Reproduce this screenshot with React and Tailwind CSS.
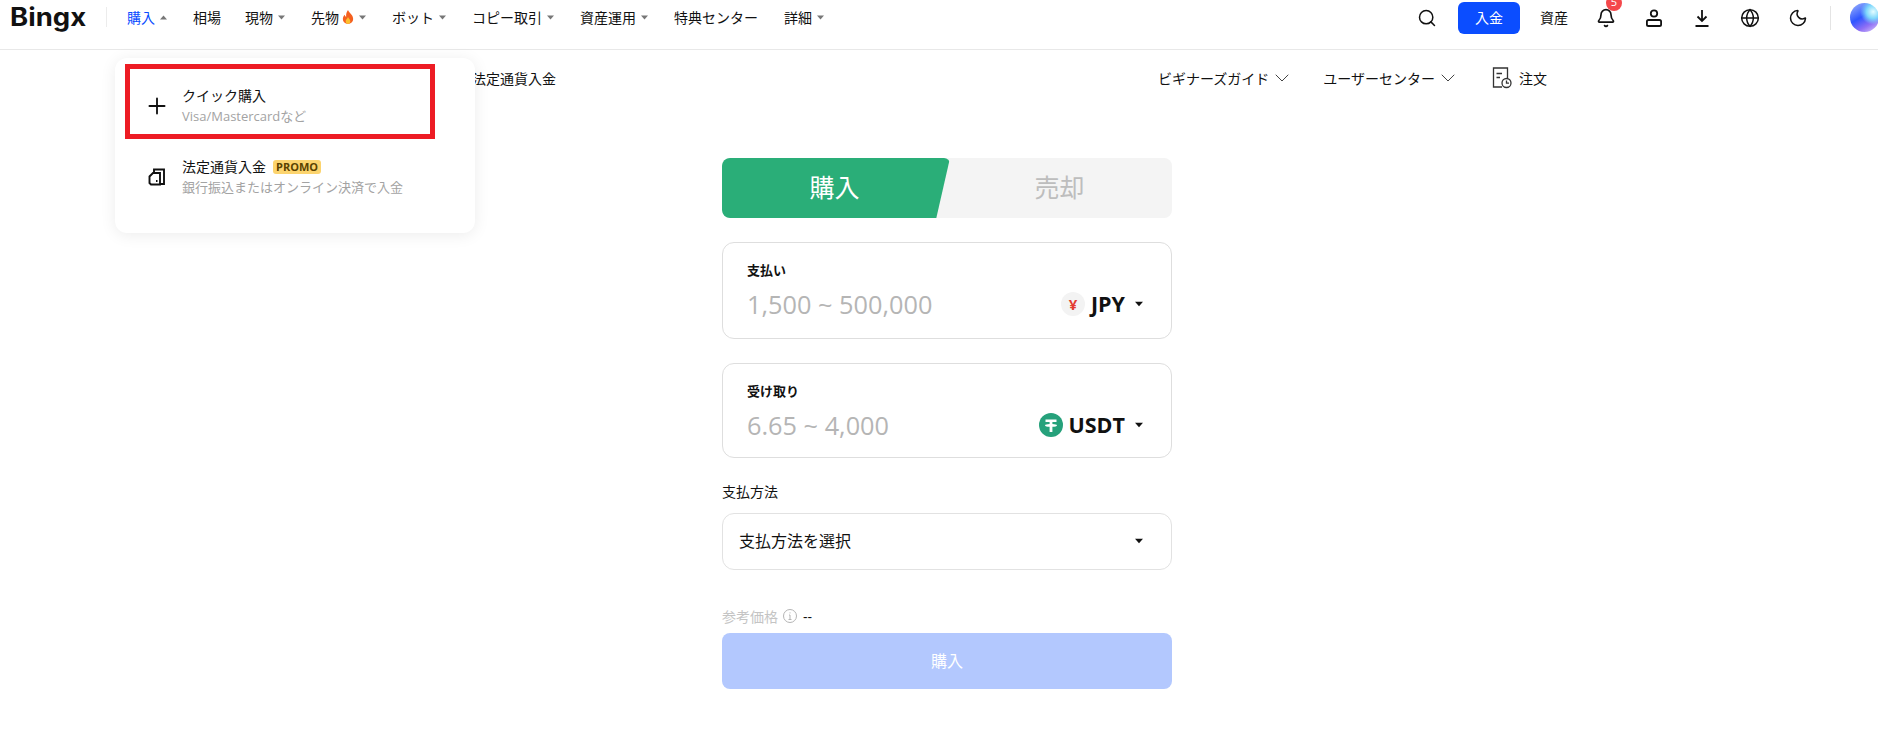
import { Search, Bell, Globe, Moon, ChevronDown, Plus } from 'lucide-react'

const FONT = 'font-["Open_Sans","Noto_Sans_CJK_JP",sans-serif]'

const NAV = [
  { label: '購入', arrow: 'up', active: true },
  { label: '相場', tight: true },
  { label: '現物', arrow: 'down' },
  { label: '先物', arrow: 'down', fire: true },
  { label: 'ボット', arrow: 'down' },
  { label: 'コピー取引', arrow: 'down' },
  { label: '資産運用', arrow: 'down' },
  { label: '特典センター' },
  { label: '詳細', arrow: 'down' },
]

function Arrow({ up, className }) {
  return (
    <svg width="7" height="5" viewBox="0 0 7 5" className={className}>
      <path d={up ? 'M3.5 0.5L7 4.5H0Z' : 'M0 0.5H7L3.5 4.5Z'} fill="currentColor" />
    </svg>
  )
}

function Logo() {
  return (
    <span className='block w-[76px]'>
      <span className='block origin-left scale-x-[1.1] text-[25px] leading-none font-bold text-[#111] font-["Inter",sans-serif]'>
        Bingx
      </span>
    </span>
  )
}

function Fire() {
  return (
    <svg width="12" height="14" viewBox="0 0 12 15" className="ml-[3px]">
      <path d="M6 0C7 3 11.5 5 11.5 9.5C11.5 13 9 15 6 15C3 15 .5 13 .5 9.5C.5 7.5 1.5 6 2.5 5C2.8 6.3 3.3 7 4 7.2C3.8 4.5 4.5 2 6 0Z" fill="#f4601f" />
      <path d="M6 7.5C6.5 9 8.5 10 8.5 12C8.5 13.8 7.3 15 6 15C4.7 15 3.5 13.8 3.5 12C3.5 10.3 5.3 9.3 6 7.5Z" fill="#fbc02d" />
    </svg>
  )
}

function Header() {
  return (
    <header className="flex h-[50px] items-start justify-between border-b border-[#e8e8e8] bg-white">
      <div className="flex h-[34px] items-center pl-[10px]">
        <Logo />
        <div className="ml-[20px] mr-[20px] h-[20px] w-px bg-[#ececec]" />
        <nav className="flex items-center gap-[26px] text-[14px] text-[#111]">
          {NAV.map((n) => (
            <div key={n.label} className={`flex items-center ${n.tight ? 'mr-[-2px]' : ''}`}>
              <span className={n.active ? 'text-[#0b4dff]' : ''}>{n.label}</span>
              {n.fire && <Fire />}
              {n.arrow && (
                <Arrow up={n.arrow === 'up'} className="ml-[5px] text-[#777]" />
              )}
            </div>
          ))}
        </nav>
      </div>
      <div className="flex h-[35px] items-center">
        <Search size={20} strokeWidth={1.8} className="mr-[21px] text-[#111]" />
        <button className="flex h-[32px] w-[62px] items-center justify-center rounded-[6px] bg-[#0b4dff] text-[14px] text-white">
          入金
        </button>
        <span className="ml-[20px] mr-[28px] text-[14px] text-[#111]">資産</span>
        <div className="relative mr-[28px] flex w-[20px] justify-center">
          <Bell size={20} strokeWidth={2} className="text-[#111]" />
          <span className="absolute right-[-6px] top-[-13px] flex h-[16px] w-[16px] items-center justify-center rounded-full bg-[#f4484b] text-[11px] text-white">
            5
          </span>
        </div>
        <svg width="20" height="20" viewBox="0 0 20 20" fill="none" stroke="#111" strokeWidth="1.8" className="mr-[28px]">
          <circle cx="10" cy="5.5" r="3.2" />
          <rect x="2.9" y="12" width="14.2" height="6" rx="1.6" />
        </svg>
        <svg width="20" height="20" viewBox="0 0 20 20" fill="none" stroke="#111" strokeWidth="1.8" className="mr-[28px]">
          <path d="M10 2V13M5.5 8.5L10 13L14.5 8.5M3.5 18H16.5" />
        </svg>
        <Globe size={20} strokeWidth={1.8} className="mr-[28px] text-[#111]" />
        <Moon size={20} strokeWidth={1.8} className="text-[#111]" />
        <div className="ml-[22px] mr-[19px] h-[24px] w-px bg-[#e4e4e4]" />
        <div className="mr-[-1px] h-[29px] w-[29px] shrink-0 rounded-full bg-[radial-gradient(circle_at_80%_30%,#e4fcff_0,#7fd8fb_22%,transparent_42%),linear-gradient(150deg,#8fa8fb_8%,#2f55ff_45%,#8f6ff5_72%,#e0d0fb)]" />
      </div>
    </header>
  )
}

function SubNav() {
  return (
    <div className="flex h-[56px] items-center text-[14px] text-[#111]">
      <span className="ml-[472px]">法定通貨入金</span>
      <div className="ml-auto mr-[331px] flex items-center">
        <span>ビギナーズガイド</span>
        <ChevronDown size={24} strokeWidth={1} className="ml-[1px] text-[#444]" />
        <span className="ml-[29px]">ユーザーセンター</span>
        <ChevronDown size={24} strokeWidth={1} className="ml-[1px] text-[#444]" />
        <svg width="20" height="22" viewBox="0 0 20 22" fill="none" stroke="#333" strokeWidth="1.3" className="ml-[32px]">
          <path d="M10 20H1.5V1H15.5V11" />
          <path d="M4.5 6.5H10M4.5 10.5H8" />
          <circle cx="14.5" cy="16" r="4.5" />
          <path d="M14.5 13.5V16.2H17" />
        </svg>
        <span className="ml-[7px]">注文</span>
      </div>
    </div>
  )
}

function Dropdown() {
  return (
    <div className="absolute left-[115px] top-[58px] h-[175px] w-[360px] rounded-[12px] bg-white shadow-[0_2px_16px_rgba(0,0,0,0.08)]">
      <div className="mt-[28px] flex items-center pl-[29px]">
        <Plus size={26} strokeWidth={1.7} className="text-[#111]" />
        <div className="ml-[12px]">
          <div className="text-[14px] leading-[20px] text-[#111]">クイック購入</div>
          <div className="text-[13px] leading-[20px] text-[#a3a3a3]">Visa/Mastercardなど</div>
        </div>
      </div>
      <div className="mt-[31px] flex items-center pl-[33px]">
        <svg width="18" height="18" viewBox="0 0 18 18" fill="none" stroke="#111" strokeWidth="1.9">
          <path d="M6 4V1.5H16V16H12" />
          <path d="M5 5H12V16.5H3L1.5 15V8.5Z" />
          <path d="M8 13H9.5" />
        </svg>
        <div className="ml-[16px]">
          <div className="flex items-center text-[14px] leading-[20px] text-[#111]">
            法定通貨入金
            <span className='ml-[7px] rounded-[3px] bg-[#fcd46e] px-[3px] text-[11px] leading-[14px] font-bold text-[#5a4200]'>PROMO</span>
          </div>
          <div className="text-[13px] leading-[20px] text-[#a3a3a3]">銀行振込またはオンライン決済で入金</div>
        </div>
      </div>
    </div>
  )
}

function Amount({ label, range, icon, unit, h }) {
  return (
    <div className={`rounded-[12px] border border-[#dedede] pl-[24px] pr-[28px] pt-[17px] ${h}`}>
      <div className="text-[13px] leading-[20px] font-bold text-[#111]">{label}</div>
      <div className="mt-[6px] flex items-center justify-between">
        <span className="text-[25.3px] leading-[36px] text-[#b5b5b5]">{range}</span>
        <div className="flex items-center text-[21.5px] font-bold text-[#111]">
          {icon}
          <span className="ml-[6px]">{unit}</span>
          <Arrow className="ml-[10px] h-[6px] w-[8px]" />
        </div>
      </div>
    </div>
  )
}

function Form() {
  return (
    <main className="ml-[722px] w-[450px] pt-[52px]">
      <div className="relative h-[60px] overflow-hidden rounded-[8px] bg-[#f4f4f4]">
        <div className="absolute inset-y-0 left-0 w-[228px] rounded-[6px] bg-[#2aae78] [clip-path:polygon(0_0,100%_0,94%_100%,0_100%)]" />
        <div className="relative flex h-full items-center text-[25px]">
          <span className="w-[225px] text-center text-white">購入</span>
          <span className="w-[225px] text-center text-[#bdbdbd]">売却</span>
        </div>
      </div>
      <div className="mt-[24px] flex flex-col gap-[24px]">
        <Amount
          label="支払い"
          range="1,500 ~ 500,000"
          unit="JPY"
          h="h-[97px]"
          icon={
            <span className="flex h-[24px] w-[24px] items-center justify-center rounded-full bg-[#f3f3f3] text-[15px] font-bold text-[#e33b32]">
              ¥
            </span>
          }
        />
        <Amount
          label="受け取り"
          range="6.65 ~ 4,000"
          unit="USDT"
          h="h-[95px]"
          icon={
            <svg width="24" height="24" viewBox="0 0 24 24">
              <circle cx="12" cy="12" r="12" fill="#26a17b" />
              <path d="M6.5 6.5H17.5V9H13.4V11C15.9 11.1 18 11.6 18 12.4S15.9 13.7 13.4 13.8V19H10.6V13.8C8.1 13.7 6 13.2 6 12.4S8.1 11.1 10.6 11V9H6.5Z" fill="#fff" />
            </svg>
          }
        />
      </div>
      <div className="mt-[24px] text-[14px] leading-[20px] text-[#111]">支払方法</div>
      <div className="mt-[11px] flex h-[57px] items-center justify-between rounded-[12px] border border-[#e2e2e2] pb-[2px] pl-[16px] pr-[28px] text-[16px] text-[#111]">
        支払方法を選択
        <Arrow className="h-[6px] w-[8px]" />
      </div>
      <div className="mt-[36px] flex h-[20px] items-center text-[14px] text-[#c4c4c4]">
        参考価格
        <svg width="16" height="16" viewBox="0 0 16 16" fill="none" stroke="#b5b5b5" className="ml-[4px]">
          <circle cx="8" cy="8" r="6.5" />
          <path d="M8 7V11.5M6.5 11.5H9.5M7 7H8M8 4.4V5.4" />
        </svg>
        <span className="ml-[5px] text-[#111]">--</span>
      </div>
      <button className="mt-[7px] h-[56px] w-full rounded-[8px] bg-[#b3c8fe] text-[16px] text-white">購入</button>
    </main>
  )
}

export default function App() {
  return (
    <div className={`relative h-[734px] overflow-hidden bg-white ${FONT}`}>
      <Header />
      <SubNav />
      <Form />
      <Dropdown />
      {/* red annotation box from the screenshot */}
      <div className="absolute left-[125px] top-[64px] h-[75px] w-[310px] border-[5px] border-[#ed1c24]" />
    </div>
  )
}
